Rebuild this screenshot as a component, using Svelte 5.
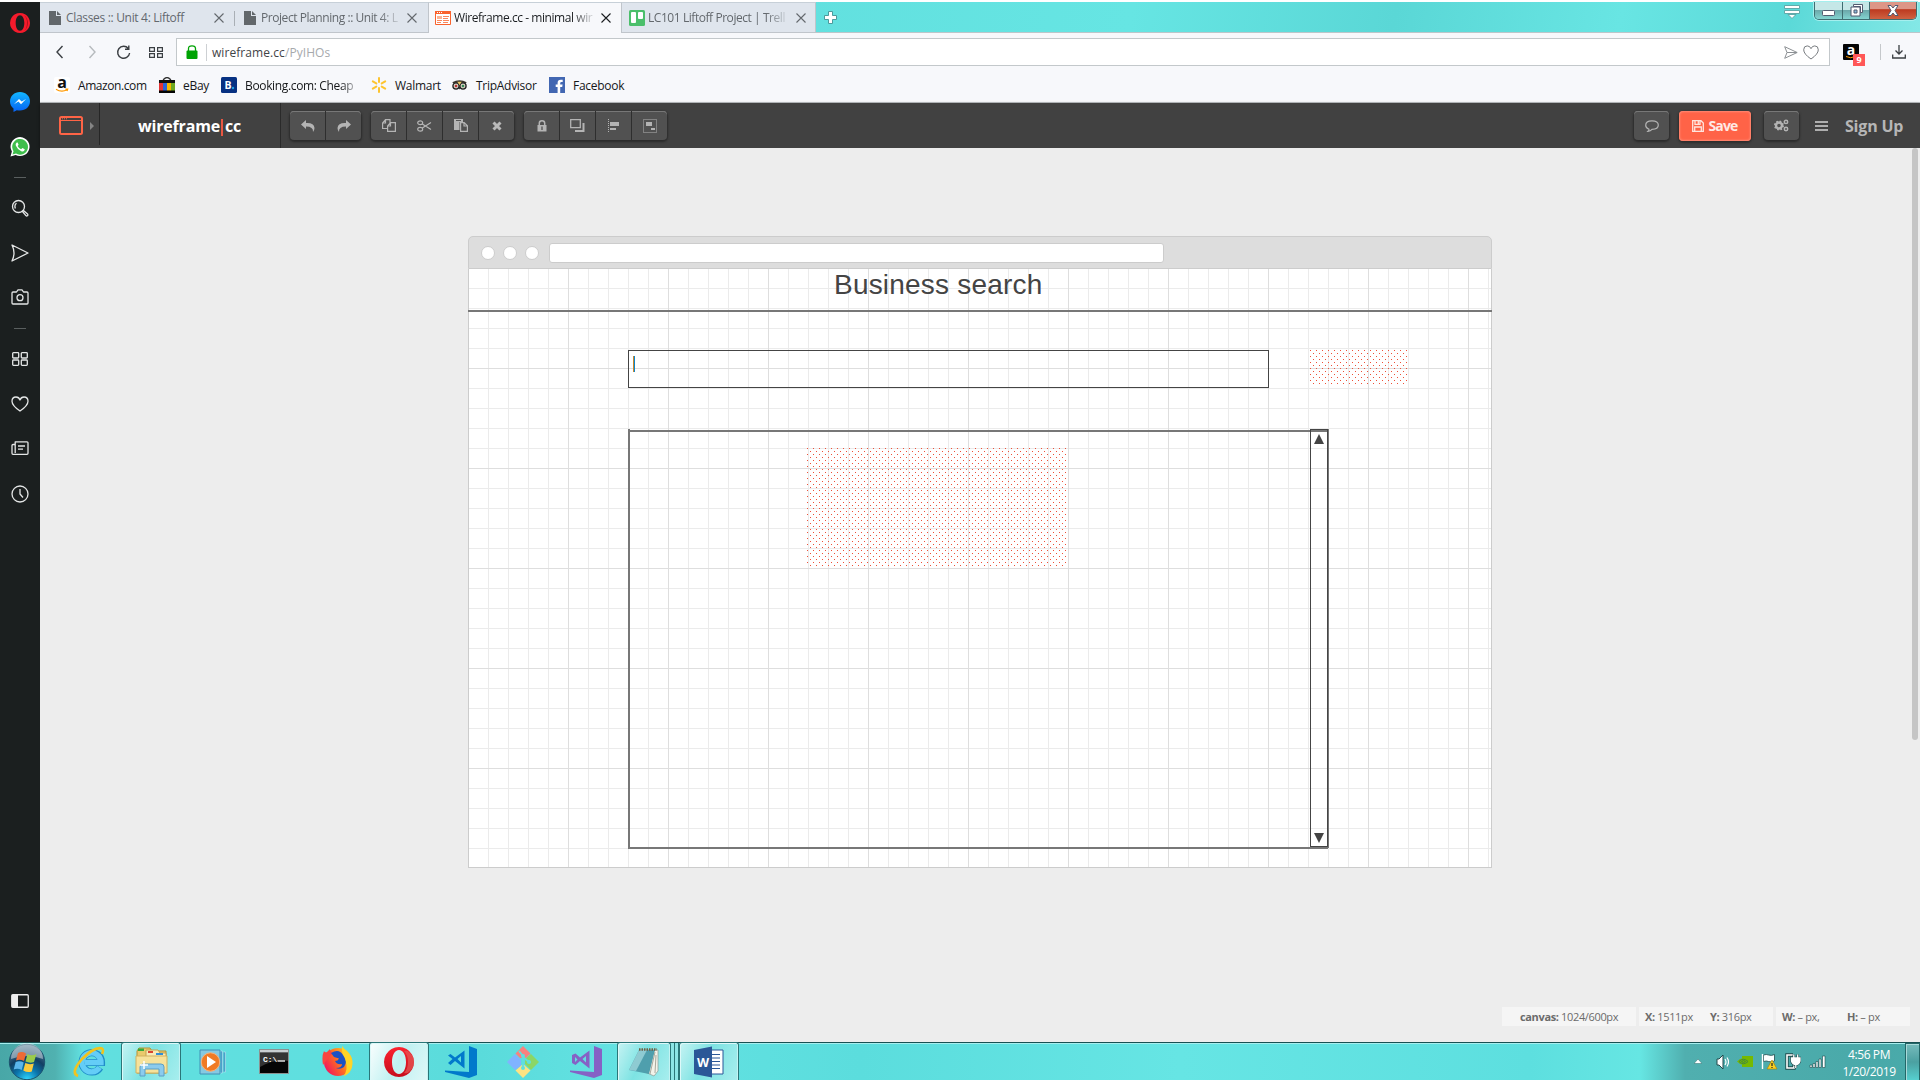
<script>
  const tabs = [
    { title: 'Classes :: Unit 4: Liftoff', icon: 'file', width: 195, cls: 'sep' },
    { title: 'Project Planning :: Unit 4: L', icon: 'file', width: 194, cls: 'wide edge' },
    { title: 'Wireframe.cc - minimal wir', icon: 'wire', width: 192, cls: 'active wide' },
    { title: 'LC101 Liftoff Project | Trell', icon: 'trello', width: 195, cls: 'edge left wide' },
  ];
  const bookmarks = [
    { title: 'Amazon.com', icon: 'amazon', width: 105 },
    { title: 'eBay', icon: 'ebay', width: 62 },
    { title: 'Booking.com: Cheap', icon: 'booking', width: 150 },
    { title: 'Walmart', icon: 'walmart', width: 81 },
    { title: 'TripAdvisor', icon: 'trip', width: 97 },
    { title: 'Facebook', icon: 'facebook', width: 90 },
  ];
  const side = [
    { icon: 'opera', h: 42 }, { icon: '', h: 36 }, { icon: 'messenger', h: 44 }, { icon: 'whatsapp', h: 46 },
    { icon: 'rule', h: 14 }, { icon: 'search', h: 48 }, { icon: 'send', h: 42 }, { icon: 'camera', h: 46 },
    { icon: 'rule', h: 16 }, { icon: 'grid', h: 46 }, { icon: 'heart', h: 44 }, { icon: 'news', h: 44 },
    { icon: 'clock', h: 48 },
  ];
  const groups = [['undo', 'redo'], ['copy', 'cut', 'paste', 'remove'], ['lock', 'layer', 'align', 'group']];
  const tasks = [
    { icon: 'start', w: 54 }, { icon: 'ie', w: 67 }, { icon: 'explorer', w: 60, cls: 'open' }, { icon: 'media', w: 65 },
    { icon: 'cmd', w: 57 }, { icon: 'firefox', w: 66 }, { icon: 'operabig', w: 60, cls: 'open bright' },
    { icon: 'code', w: 63 }, { icon: 'git', w: 62 }, { icon: 'vs', w: 63 }, { icon: 'notepad', w: 54, cls: 'open' },
    { icon: 'stack', w: 8 }, { icon: 'word', w: 60, cls: 'open' },
  ];
</script>

{#snippet glyph(name)}
  {#if name === 'file'}
    <svg width="12" height="14" viewBox="0 0 12 14"><path d="M0 0h7v5h5v9H0z M8 0l4 4H8z" fill="#62676b" /></svg>
  {:else if name === 'wire'}
    <svg width="16" height="14" viewBox="0 0 16 14"><path d="M.5.5h15v13H.5z" fill="#fff" stroke="#f9622d" /><path d="M0 0h16v3H0z" fill="#f9622d" /><path d="M2 1.500h1M4 1.500h1M6 1.500h1" stroke="#fff" /><path d="M2 5h5v3H2z" fill="#fbb394" /><path d="M8 5.500h6M8 7.500h5M2 9.500h5M8 9.500h6M2 11.500h4M8 11.500h5" stroke="#f9875e" /></svg>
  {:else if name === 'trello'}
    <svg width="16" height="16" viewBox="0 0 16 16"><rect width="16" height="16" rx="1.5" fill="#4bbf6b" /><rect x="2" y="2" width="5" height="11" rx="1" fill="#fff" /><rect x="9" y="2" width="5" height="7" rx="1" fill="#fff" /></svg>
  {:else if name === 'close'}
    <svg width="10" height="10" viewBox="0 0 10 10"><path d="M.5.5l9 9M9.500.5l-9 9" stroke="currentColor" stroke-width="1.1" /></svg>
  {:else if name === 'amazon'}
    <svg width="16" height="16" viewBox="0 0 16 16"><rect width="16" height="16" rx="2" fill="#fff" /><text x="8" y="10.500" text-anchor="middle" font-size="16" font-weight="700" font-family="Open Sans, sans-serif" fill="#111">a</text><path d="M2 12.200q5.500 3.600 11 .6M11.300 12h2.400l-.7 2" fill="none" stroke="#f90" stroke-width="1.200" /></svg>
  {:else if name === 'ebay'}
    <svg width="16" height="16" viewBox="0 0 16 16"><path d="M4.500 3.500v-1q3.500-4 7 0v1" fill="none" stroke="#333" stroke-width="1.300" /><path d="M0 3h16v13H0z" fill="#111" /><path d="M0 6h4v8H0z" fill="#e33434" /><path d="M4 6h4v8H4z" fill="#2a64d8" /><path d="M8 6h4v8H8z" fill="#f5b800" /><path d="M12 6h4v8h-4z" fill="#6da820" /><path d="M0 13.500h16V16H0z" fill="#050505" /></svg>
  {:else if name === 'booking'}
    <svg width="16" height="16" viewBox="0 0 16 16"><rect width="16" height="16" rx="1.5" fill="#073182" /><text x="3.500" y="12" font-size="10.500" font-weight="700" font-family="Open Sans, sans-serif" fill="#fff">B</text><circle cx="12" cy="11" r="1.200" fill="#1ba0e2" /></svg>
  {:else if name === 'walmart'}
    <svg width="16" height="16" viewBox="0 0 16 16"><path d="M8 1v4M8 11v4M1.800 4.400l3.500 2M10.700 9.600l3.500 2M1.800 11.600l3.500-2M10.700 6.400l3.500-2" stroke="#fdc42f" stroke-width="2" stroke-linecap="round" /></svg>
  {:else if name === 'trip'}
    <svg width="15" height="11" viewBox="0 0 16 12"><path d="M0 2.500q8-4.500 16 0l-2 1.500H2z" fill="#39352b" /><circle cx="4.200" cy="6.500" r="3.400" fill="#d5cfc0" stroke="#222" stroke-width="1.400" /><circle cx="11.800" cy="6.500" r="3.400" fill="#d5cfc0" stroke="#222" stroke-width="1.400" /><circle cx="4.200" cy="6.500" r="1.400" fill="#b33" /><circle cx="11.800" cy="6.500" r="1.400" fill="#385" /><path d="M5.500 2h5L8 5.500z" fill="#e9c663" /><path d="M7 8h2l-1 2.500z" fill="#222" /></svg>
  {:else if name === 'facebook'}
    <svg width="16" height="16" viewBox="0 0 16 16"><path d="M0 0h16v16H0z" fill="#4267b2" /><path d="M8.600 16v-6H6.700V7.500h1.900V6q0-3.300 3.200-3.300h1.900V5h-1.300q-1.200 0-1.200 1.200v1.300h2.400l-.4 2.500h-2v6z" fill="#fff" /></svg>
  {:else if name === 'opera'}
    <svg width="20" height="20" viewBox="0 0 20 20"><path fill-rule="evenodd" d="M10 0a10 10 0 1 0 .01 0M10 2.300c2.600 0 4.300 3.200 4.300 7.700s-1.700 7.700-4.300 7.700-4.300-3.200-4.300-7.700S7.400 2.300 10 2.300" fill="#f51b2c" /><path d="M14 2q3 3 3 8t-3 8a10 10 0 0 0 0-16" fill="#b2101c" /></svg>
  {:else if name === 'messenger'}
    <svg width="20" height="20" viewBox="0 0 20 20"><defs><linearGradient id="msg" x1="0" y1="0" x2="0" y2="1"><stop offset="0" stop-color="#12b6ff" /><stop offset="1" stop-color="#0561f5" /></linearGradient></defs><path d="M10 0C4.300 0 0 4 0 9.400c0 2.900 1.300 5.300 3.500 7V20l3.300-1.800c1 .3 2 .4 3.200.4 5.700 0 10-4 10-9.300S15.700 0 10 0z" fill="url(#msg)" /><path d="M4 12.300L9 7l2.700 2.600L16 7l-5 5.200-2.600-2.600z" fill="#fff" /></svg>
  {:else if name === 'whatsapp'}
    <svg width="20" height="20" viewBox="0 0 20 20"><path d="M.5 19.500l1.400-5A9.500 9.500 0 1 1 5.600 18z" fill="#fff" /><path d="M2.500 17.500l1-3.300A7.900 7.900 0 1 1 6 16.600z" fill="#3fbe4c" /><path d="M6.800 5.400q-1.800 1.100-.9 3.400 1.600 3.900 5.400 5.400 2.900 1 3.500-2l-2.400-1.300-1.300 1.300q-2.400-1-3.500-3.300l1-1.200-1-2.300z" fill="#fff" /></svg>
  {:else if name === 'rule'}
    <span class="rule"></span>
  {:else if name === 'search'}
    <svg class="ln" width="18" height="18" viewBox="0 0 18 18"><circle cx="7.500" cy="7.500" r="6" /><path d="M4.400 9.500Q3 6 5.500 4.200M11.500 12.500l1-1 4 3.500q.8 1-.1 1.700-.8.600-1.500-.1z" /></svg>
  {:else if name === 'send'}
    <svg class="ln" width="18" height="18" viewBox="0 0 18 18"><path d="M1 1l16 8L1 17q4-8 0-16z" /></svg>
  {:else if name === 'camera'}
    <svg class="ln" width="18" height="16" viewBox="0 0 18 16"><path d="M2 3h3.500L7 .8h4L12.500 3H16q1 0 1 1v10q0 1-1 1H2q-1 0-1-1V4q0-1 1-1z" /><circle cx="9" cy="8.700" r="3" /></svg>
  {:else if name === 'grid'}
    <svg class="ln" width="16" height="14" viewBox="0 0 16 14"><rect x=".7" y=".7" width="6" height="5.300" rx=".8" /><rect x="9.300" y=".7" width="6" height="5.300" rx=".8" /><rect x=".7" y="8" width="6" height="5.300" rx=".8" /><rect x="9.300" y="8" width="6" height="5.300" rx=".8" /></svg>
  {:else if name === 'heart'}
    <svg class="ln" width="18" height="16" viewBox="0 0 18 16"><path d="M9 15Q1 9.500 1 5.200 1 1 5 1q3 0 4 3 1-3 4-3 4 0 4 4.200Q17 9.500 9 15z" /></svg>
  {:else if name === 'news'}
    <svg class="ln" width="18" height="14" viewBox="0 0 18 14"><path d="M4.200 12V.8h11.800q1 0 1 1v10.500q0 1-1 1H2q-1 0-1-1V4.500q0-1 1-1h2M7 5h7M7 8.200h5" /></svg>
  {:else if name === 'clock'}
    <svg class="ln" width="18" height="18" viewBox="0 0 18 18"><circle cx="9" cy="9" r="8" /><path d="M9 4v5l3 3.500" /></svg>
  {:else if name === 'panel'}
    <svg width="18" height="14" viewBox="0 0 18 14"><rect x=".75" y=".75" width="16.500" height="12.500" rx="1" fill="none" stroke="#eee" stroke-width="1.300" /><path d="M1 1h6v12H1z" fill="#eee" /></svg>
  {:else if name === 'undo'}
    <svg width="14" height="12" viewBox="0 0 14 12"><path d="M0 4.500L5 0v3q8-.500 8.500 5 0 2-1.500 4 .5-5.500-7-5.500V9z" fill="#b4b4b4" /></svg>
  {:else if name === 'redo'}
    <svg width="14" height="12" viewBox="0 0 14 12"><path d="M14 4.500L9 0v3Q1 2.500.5 8q0 2 1.500 4-.5-5.500 7-5.500V9z" fill="#b4b4b4" /></svg>
  {:else if name === 'copy'}
    <svg class="tl" width="14" height="13" viewBox="0 0 14 13"><path d="M5 9.500H.6V4L3.500.6H8V4M3.500.6V4H.6M8.500 3.600h4.900v8.800H5.600V7zM8.500 3.600V7H5.600" /></svg>
  {:else if name === 'cut'}
    <svg class="tl" width="15" height="12" viewBox="0 0 15 12"><ellipse cx="3.200" cy="2.800" rx="2.500" ry="1.900" /><ellipse cx="3.200" cy="9.200" rx="2.500" ry="1.900" /><path d="M5.300 4L14 9.500M5.300 8L14 2.500M7 6h2" /></svg>
  {:else if name === 'paste'}
    <svg width="14" height="13" viewBox="0 0 14 13"><path d="M0 0h9v3H5.500v8H0z" fill="#b4b4b4" /><path d="M2 1.500h5" stroke="#555" /><path d="M6.600 3.600h3.600l3.200 3.200v5.600H6.600z M10 3.600V7h3.400" fill="#515151" stroke="#b4b4b4" stroke-width="1.200" /></svg>
  {:else if name === 'remove'}
    <svg width="10" height="10" viewBox="0 0 10 10"><path d="M1.500 1.500l7 7M8.500 1.500l-7 7" stroke="#b9b9b9" stroke-width="3" /></svg>
  {:else if name === 'lock'}
    <svg width="10" height="12" viewBox="0 0 10 12"><path d="M2.300 5V3.300q0-2.500 2.700-2.500t2.700 2.500V5" fill="none" stroke="#b4b4b4" stroke-width="1.500" /><path d="M.5 5h9v6.500h-9z" fill="#b4b4b4" /><path d="M5 6.500v3.500" stroke="#515151" stroke-width="1.300" /></svg>
  {:else if name === 'layer'}
    <svg width="15" height="13" viewBox="0 0 15 13"><path d="M5 11h7.500V4H14.500v9H5z" fill="#b4b4b4" /><path d="M.7.7h9.600v8H.7z" fill="none" stroke="#b4b4b4" stroke-width="1.300" /></svg>
  {:else if name === 'align'}
    <svg width="12" height="14" viewBox="0 0 12 14"><path d="M.5 0v14" stroke="#b4b4b4" stroke-dasharray="1 1" /><path d="M2 3h9v4H2zM2 9h6v2H2z" fill="#b4b4b4" /></svg>
  {:else if name === 'group'}
    <svg width="14" height="14" viewBox="0 0 14 14"><path d="M.5.5h13v13H.5z" fill="none" stroke="#b4b4b4" stroke-dasharray="1 1" /><path d="M3 3h6v4H3zM8 9h4v2H8z" fill="#b4b4b4" /></svg>
  {:else if name === 'comment'}
    <svg class="tl" width="14" height="12" viewBox="0 0 14 12"><path d="M4 9.200Q.7 8 .7 5.200.7.900 7 .9t6.300 4.200Q13.300 9.400 7 9.400q-1.500 1.800-4 1.900 1-.9 1-2.100z" /></svg>
  {:else if name === 'save'}
    <svg width="12" height="12" viewBox="0 0 12 12"><path d="M.7.7h8.300l2.300 2.300v8.300H.7zM3 .7v3.600h5V.7M2.700 11V7h6.600v4M6.300 1v3" fill="none" stroke="#ffe5df" stroke-width="1.300" /></svg>
  {:else if name === 'gears'}
    <svg width="15" height="13" viewBox="0 0 15 13"><circle cx="5" cy="6.500" r="3" fill="none" stroke="#b4b4b4" stroke-width="2.400" /><circle cx="5" cy="6.500" r="4.300" fill="none" stroke="#b4b4b4" stroke-width="1.400" stroke-dasharray="1.700 1.700" /><circle cx="12" cy="2.900" r="1.700" fill="none" stroke="#b4b4b4" stroke-width="1.500" /><circle cx="12" cy="10" r="1.700" fill="none" stroke="#b4b4b4" stroke-width="1.500" /></svg>
  {:else if name === 'start'}
    <svg width="38" height="38" viewBox="0 0 38 38"><defs><radialGradient id="orb" cx=".5" cy="1" r=".95"><stop offset="0" stop-color="#2fd9ff" /><stop offset=".35" stop-color="#0b76ad" /><stop offset=".65" stop-color="#123f63" /><stop offset="1" stop-color="#587e96" /></radialGradient></defs><circle cx="19" cy="19" r="17.700" fill="url(#orb)" stroke="#1c5470" /><path d="M3 16a16 16 0 0 1 32 0q-16-6-32 0z" fill="#fff" opacity=".42" /><path d="M10 10q4-2 8 .5L16 18q-4-2-8-.5z" fill="#ee6a35" /><path d="M19.500 11q4 2.500 9 0L26 19q-4 1.500-8.500-.5z" fill="#9bcb4b" /><path d="M7.700 19q4-1.500 8 .5l-2 7.500q-4-2-8-.5z" fill="#5bb6ec" /><path d="M17.300 20q4 2 8.500.5l-2 8q-4.500 1.500-8.500-1z" fill="#fbcb3d" /></svg>
  {:else if name === 'ie'}
    <svg width="34" height="34" viewBox="0 0 34 34"><path d="M27 22.500a9.700 9.700 0 1 1 1.500-5H12" fill="none" stroke="#1f8dc9" stroke-width="7.200" /><path d="M26.500 22.500a9.500 9.500 0 1 1 1.500-5H12" fill="none" stroke="#64cdf7" stroke-width="5.400" /><path d="M5 31Q-3 28 9 14 22 1 29 3.500q2 1.500 0 5.500" fill="none" stroke="#f1c31e" stroke-width="2.600" /></svg>
  {:else if name === 'explorer'}
    <svg width="34" height="32" viewBox="0 0 34 32"><path d="M3 5l2-3h11l2 3h14v22H3z" fill="#e9ca6d" stroke="#b69137" /><path d="M12 4h12l2 3h6v5H12z" fill="#f9eab5" stroke="#c3a24c" /><path d="M4 2.500h6V5H4z" fill="#35ac3b" /><path d="M14 5h5v2h-5z" fill="#d94430" /><path d="M22 7h7v2h-7z" fill="#2f8fd6" /><path d="M2 10h31v17H2z" fill="#f6e29b" stroke="#d1b161" /><path d="M6 30V21q0-3 3-3h18q3 0 3 3v9h-5v-7H11v7z" fill="#8ccbed" stroke="#5b9fc6" /><path d="M10 15v8M6 19h8" stroke="#fff" stroke-width="1.500" /></svg>
  {:else if name === 'media'}
    <svg width="30" height="26" viewBox="0 0 30 26"><path d="M1 1h20v24H1z" fill="#85c9e2" stroke="#4190b5" /><path d="M21.500 2h2v22h-2M24.500 3h2v20h-2" fill="#4e9fc9" stroke="#c9ecf7" stroke-width=".5" /><circle cx="11.500" cy="13" r="9.200" fill="#f07a24" stroke="#f7b27a" /><path d="M8 7l9 6-9 6z" fill="#fff" /></svg>
  {:else if name === 'cmd'}
    <svg width="30" height="25" viewBox="0 0 30 25"><path d="M.5.5h29v24H.5z" fill="#050505" stroke="#8b9190" /><path d="M1 1h28v2.500H1z" fill="#c9cfd2" /><path d="M1 4h28v8Q15 10 1 18z" fill="#343434" /><text x="4" y="12.500" font-family="Liberation Mono, monospace" font-weight="700" font-size="8" fill="#fff">C:\</text><path d="M18.500 12h7.500" stroke="#fff" stroke-width="1.300" /></svg>
  {:else if name === 'firefox'}
    <svg width="31" height="32" viewBox="0 0 31 32"><defs><linearGradient id="fox" x1="0" y1=".7" x2="1" y2=".1"><stop offset="0" stop-color="#f0165f" /><stop offset=".45" stop-color="#ff6a22" /><stop offset="1" stop-color="#ffe226" /></linearGradient></defs><circle cx="16" cy="16" r="14" fill="url(#fox)" /><path d="M2 5q1 2 3 1l3-3q0 3 3 4L4 15 1 19Q-.5 10 2 5z" fill="#fb4440" /><path d="M20 0q2 3 5 5 6 6 5.500 13-.5 9-9 12.500 5-8 2-15-4-6-3.500-15.500z" fill="#ffd426" /><path d="M9 7q8-5 12 2 5 7 1 12-4 3-8 1 6 0 6-4-5 1-7-3 3 0 4-2.500L12 11z" fill="#1c51c4" /></svg>
  {:else if name === 'operabig'}
    <svg width="32" height="32" viewBox="0 0 32 32"><defs><linearGradient id="op" x1="0" y1="0" x2="0" y2="1"><stop offset="0" stop-color="#fb2330" /><stop offset="1" stop-color="#c70d1c" /></linearGradient></defs><path fill-rule="evenodd" d="M16 1a15 15 0 1 0 .01 0M16 4c4.200 0 7 5 7 12s-2.800 12-7 12S9 23 9 16 11.800 4 16 4" fill="url(#op)" /><path d="M21 5q4 4 4 11t-4 11q3 1 5-1 5-4 5-10T26 6q-2-2-5-1z" fill="#e25553" opacity=".75" /></svg>
  {:else if name === 'code' || name === 'vs'}
    <svg class={name} width="32" height="32" viewBox="0 0 32 32"><path d="M24 0l8 3v26l-8 3L0 26v-1.500L24 26z" fill="currentColor" />{#if name === 'code'}<path d="M19.500 4.500v18L10 15l-4.500 4L3 17l4.500-4L3 9.500 5.500 8 10 11.500zM16 10L12.500 13l3.500 3.500z" fill="currentColor" fill-rule="evenodd" />{:else}<path d="M19.500 4.500v18L10 15l-4.500 4L2 17V9l3.500-1.500L10 11.500zM5 11v5l2.500-2.500zM16 10l-3.500 3 3.500 3.500z" fill="currentColor" fill-rule="evenodd" />{/if}</svg>
  {:else if name === 'git'}
    <svg width="32" height="32" viewBox="0 0 32 32"><path d="M16 0l7.500 7.500L19 12h-6L8.500 7.500z" fill="#f8817e" /><path d="M8 8l6 6v6l-6 4-8-8z" fill="#80b3ff" /><path d="M24 8l8 8-8 8-6-6v-5z" fill="#8bd666" /><path d="M16 18l7.500 6.500L16 32l-7.500-7.500z" fill="#fde382" /><path d="M12 5l4 5v12M16 11l6 5" stroke="#60dfde" stroke-width="1.800" fill="none" /><circle cx="16" cy="10" r="2" fill="#60dfde" /><circle cx="16" cy="22" r="2" fill="#60dfde" /><circle cx="22" cy="16" r="2" fill="#60dfde" /></svg>
  {:else if name === 'notepad'}
    <svg width="32" height="30" viewBox="0 0 32 30"><path d="M12 3h18v21l-4 5-9-4z" fill="#f3f3ea" stroke="#8d9a92" stroke-width=".7" /><path d="M11 3h16l-6 24-20-4z" fill="#4f9fad" /><path d="M11 3h8L8 24l-7-1z" fill="#8ecbd2" /><path d="M27 5l-5 22M28 8l-1 18" stroke="#a8a89c" /><path d="M11 2.500h18" stroke="#6e6045" stroke-width="2.500" stroke-dasharray="1.500 1" /></svg>
  {:else if name === 'word'}
    <svg width="32" height="32" viewBox="0 0 32 32"><path d="M17 4h13v24H17z" fill="#fff" stroke="#2b5797" /><path d="M18 8.500h9M18 12h9M18 15.500h9M18 19h9M18 22.500h9" stroke="#2b5797" stroke-width="1.200" /><path d="M1 4l18-3.500v31L1 28z" fill="#2b5797" /><text x="10" y="20.500" text-anchor="middle" font-family="Open Sans, sans-serif" font-size="12.500" font-weight="700" fill="#fff">W</text></svg>
  {/if}
{/snippet}

<div class="screen">
  <div class="top-edge"></div>
  <div class="browser">
    <aside>
      {#each side as item}
        <div class="side" style:height="{item.h}px">{@render glyph(item.icon)}</div>
      {/each}
      <div class="side bottom">{@render glyph('panel')}</div>
    </aside>

    <div class="main">
      <div class="tabs">
        {#each tabs as t}
          <div class="tab {t.cls}" style:width="{t.width}px">
            <span class="fav">{@render glyph(t.icon)}</span>
            <span class="tab-title">{t.title}</span>
            {@render glyph('close')}
          </div>
        {/each}
        <svg class="plus" width="13" height="13" viewBox="0 0 13 13"><path d="M4.500.5h4v4h4v4h-4v4h-4v-4h-4v-4h4z" fill="#fff" stroke="#4b9a9c" /></svg>
        <svg class="tabmenu" width="16" height="14" viewBox="0 0 16 14"><path d="M.5.5h15v3H.5zM.5 5.500h15v3H.5zM4 9.500h8l-4 4z" fill="#fff" stroke="#58a3a4" stroke-width=".9" /></svg>
        <div class="winctl">
          <span class="min"><svg width="13" height="6" viewBox="0 0 13 6"><rect x=".5" y=".5" width="12" height="5" rx="1" fill="#fff" stroke="#535b70" /></svg></span>
          <span class="max"><svg width="13" height="13" viewBox="0 0 13 13"><path d="M3.500.5h9v8h-2v-6h-7z" fill="#fff" stroke="#535b70" /><path d="M1 3h9v9H1z" fill="#fff" stroke="#535b70" /><path d="M4 6h3v3H4z" fill="#8bd" stroke="#535b70" /></svg></span>
          <span class="cls"><svg width="12" height="11" viewBox="0 0 12 11"><path d="M1 .5h3l2 2.500 2-2.500h3L8 5.500l3 5H8L6 8l-2 2.500H1l3-5z" fill="#fff" stroke="#535b70" /></svg></span>
        </div>
      </div>

      <div class="address">
        <svg class="nav" width="32" height="20" viewBox="0 0 32 20"><path d="M18.500 4L13 10l5.500 6" fill="none" stroke="#3b3f43" stroke-width="1.400" /></svg>
        <svg class="nav" width="32" height="20" viewBox="0 0 32 20"><path d="M13.500 4L19 10l-5.500 6" fill="none" stroke="#b6babd" stroke-width="1.400" /></svg>
        <svg class="nav" width="32" height="20" viewBox="0 0 32 20"><path d="M20.300 6.500a6 6 0 1 0 1.300 4.500M20.800 3.500v3.800H17" fill="none" stroke="#3b3f43" stroke-width="1.400" /></svg>
        <svg class="nav" width="32" height="20" viewBox="0 0 32 20"><path d="M9.600 5.600h4.800v3.800H9.600zM17.600 5.600h4.800v3.800h-4.800zM9.600 11.600h4.800v3.800H9.600zM17.600 11.600h4.800v3.800h-4.800z" fill="none" stroke="#3b3f43" stroke-width="1.200" /></svg>
        <div class="field">
          <svg width="12" height="14" viewBox="0 0 12 14"><path d="M2.500 6V3.500q0-2.700 3.500-2.700t3.500 2.700V6" fill="none" stroke="#00a304" stroke-width="1.300" /><rect y="5.500" x=".5" width="11" height="8.500" rx="1" fill="#00a304" /></svg>
          <span class="url">wireframe.cc<i>/PyIHOs</i></span>
          <svg width="14" height="13" viewBox="0 0 14 13"><path d="M.7.7l12.500 5.800L.7 12.300 3 6.500zM3 6.500h10" fill="none" stroke="#8c9094" /></svg>
          <svg width="16" height="15" viewBox="0 0 16 15"><path d="M8 14Q.7 9 .7 4.800.7.900 4.200.9 7 .9 8 3.700 9 .9 11.800.9q3.500 0 3.500 3.900Q15.300 9 8 14z" fill="none" stroke="#777b7f" /></svg>
        </div>
        <div class="ext">
          <svg width="16" height="16" viewBox="0 0 16 16"><rect width="16" height="16" rx="1" fill="#050505" /><text x="8" y="11" text-anchor="middle" font-family="Open Sans, sans-serif" font-weight="700" font-size="14" fill="#fff">a</text><path d="M3 12.500q5 2.500 9 0" stroke="#f90" fill="none" /></svg>
          <span class="badge">9</span>
        </div>
        <svg class="dl" width="14" height="14" viewBox="0 0 14 14"><path d="M7 0v8.500M3.500 5.500L7 9l3.500-3.500M.7 9.500V13h12.600V9.500" fill="none" stroke="#3b3f43" stroke-width="1.300" /></svg>
      </div>

      <div class="bookmarks">
        {#each bookmarks as b}
          <div class="bm" style:width="{b.width}px">
            <span class="bi">{@render glyph(b.icon)}</span>
            <span class="bt {b.icon}">{b.title}</span>
          </div>
        {/each}
      </div>

      <div class="toolbar">
        <div class="device">
          <svg width="24" height="19" viewBox="0 0 24 19"><rect x="1" y="1" width="22" height="17" rx="1.500" fill="none" stroke="#ff6446" stroke-width="2" /><path d="M2 4.500h20" stroke="#ff6446" /><path d="M3 2.800h1M5 2.800h1M7 2.800h1" stroke="#ff6446" /></svg>
          <svg width="4" height="8" viewBox="0 0 4 8"><path d="M0 0l4 4-4 4z" fill="#858585" /></svg>
        </div>
        <div class="logo">wireframe<b></b>cc</div>
        {#each groups as g}
          <div class="group">
            {#each g as name}<span class="btn">{@render glyph(name)}</span>{/each}
          </div>
        {/each}
        <span class="fill"></span>
        <div class="group solo"><span class="btn">{@render glyph('comment')}</span></div>
        <div class="save">{@render glyph('save')}<span>Save</span></div>
        <div class="group solo"><span class="btn">{@render glyph('gears')}</span></div>
        <svg class="burger" width="13" height="10" viewBox="0 0 13 10"><path d="M0 1h13M0 5h13M0 9h13" stroke="#aeaeae" stroke-width="2" /></svg>
        <span class="signup">Sign Up</span>
      </div>

      <div class="work">
        <div class="frame">
          <div class="frame-head"><i></i><i></i><i></i><span></span></div>
          <div class="canvas">
            <div class="item heading">Business search</div>
            <div class="item hline"></div>
            <div class="item input"><span></span></div>
            <div class="item dots small"></div>
            <div class="item box-top"></div>
            <div class="item box-left"></div>
            <div class="item box-right"></div>
            <div class="item box-bottom"></div>
            <div class="item dots large"></div>
            <div class="item scroll">
              <svg width="10" height="10" viewBox="0 0 10 10"><path d="M5 0l5 10H0z" fill="#444" /></svg>
              <svg width="10" height="10" viewBox="0 0 10 10"><path d="M0 0h10L5 10z" fill="#444" /></svg>
            </div>
          </div>
        </div>
        <div class="page-scroll"></div>
        <div class="status">
          <div class="center"><span><b>canvas:</b> 1024/600px</span></div>
          <div><span class="first"><b>X:</b> 1511px</span><span><b>Y:</b> 316px</span></div>
          <div><span class="first"><b>W:</b> – px,</span><span><b>H:</b> – px</span></div>
        </div>
      </div>
    </div>
  </div>

  <div class="taskbar">
    {#each tasks as t}
      <div class="task {t.icon}-task {t.cls ?? ''}" style:width="{t.w}px">{@render glyph(t.icon)}</div>
    {/each}
    <div class="tray">
      <svg class="t1" width="8" height="5" viewBox="0 0 8 5"><path d="M4 0l4 4.500H0z" fill="#fff" stroke="#2d6c6c" stroke-width=".5" /></svg>
      <svg class="t2" width="14" height="16" viewBox="0 0 14 16"><path d="M1 5h2l4-4v14l-4-4H1z" fill="#fff" stroke="#22494a" /><path d="M9 5q2 3 0 6M11 3.500q3 4.500 0 9" fill="none" stroke="#fff" stroke-width="1.200" /></svg>
      <svg class="t3" width="16" height="11" viewBox="0 0 16 11"><path d="M5 0h11v11H5z" fill="#76b900" /><path d="M0 5.500Q6-1 12 5.500 6 12 0 5.500z" fill="#76b900" /><path d="M2 5.500Q6.500 1 11 5.500 6.500 10 2 5.500zM4.500 5.500q2-2 4 0-2 2-4 0" fill="none" stroke="#438a3f" /></svg>
      <svg class="t4" width="17" height="17" viewBox="0 0 17 17"><path d="M1.500 1v15M2.500 2q3-1 5 0 3 1 6-.5v6.500q-3 1.500-6 .5-2-1-5 0z" fill="#fff" stroke="#204a4b" stroke-width=".8" /><path d="M1.500 1v15" stroke="#fff" stroke-width="1.400" /><path d="M11 7l5 9H6z" fill="#f8cf24" stroke="#a67c00" stroke-width=".6" /><path d="M11 10v3M11 14v1" stroke="#222" stroke-width="1.200" /></svg>
      <svg class="t5" width="16" height="17" viewBox="0 0 16 17"><path d="M8 2H2v13h7v-3" fill="none" stroke="#204a4b" stroke-width="3.400" /><path d="M8 2H2v13h7v-3" fill="none" stroke="#fff" stroke-width="1.600" /><path d="M6.500 5h8.500v3q-1 3.500-4.200 3.500T6.500 8zM8.800 1.500v4M12.700 1.500v4M10.800 11v4" fill="#fff" stroke="#204a4b" stroke-width="2.600" /><path d="M6.500 5h8.500v3q-1 3.500-4.200 3.500T6.500 8zM8.800 1.500v4M12.700 1.500v4M10.800 11v4" fill="#fff" stroke="#fff" stroke-width="1.300" /></svg>
      <svg class="t6" width="17" height="13" viewBox="0 0 17 13"><path d="M1 10h2v2.500H1zM4 8.500h2v4H4zM7 6.500h2v6H7zM10 4h2v8.500h-2zM13.500 1h2.500v11.500h-2.500z" fill="#fff" stroke="#204a4b" stroke-width=".6" /></svg>
      <div class="time"><span>4:56 PM</span><span>1/20/2019</span></div>
      <div class="peek"></div>
    </div>
  </div>
</div>

<style>
  :global(body) { margin: 0; overflow: hidden; }
  .screen { width: 1920px; height: 1080px; display: flex; flex-direction: column; overflow: hidden; font-family: 'Open Sans', 'Noto Sans', sans-serif; font-size: 12px; }
  svg { display: block; flex: none; }
  .top-edge { height: 2px; background: #fff; flex: none; }
  .browser { display: flex; height: 1040px; flex: none; }
  aside { width: 40px; flex: none; display: flex; flex-direction: column; background: #1b1f1f; }
  .side { display: flex; align-items: center; justify-content: center; flex: none; }
  .side.bottom { height: 82px; margin-top: auto; }
  .side svg { margin-right: 1px; }
  .rule { width: 12px; height: 1px; background: #5a5f5f; }
  .ln { fill: none; stroke: #e4e6e6; stroke-width: 1.3; stroke-linejoin: round; }
  .main { width: 1880px; display: flex; flex-direction: column; }

  .tabs { height: 31px; display: flex; flex: none; box-sizing: border-box; border-bottom: 1px solid #bcc6ca; background: linear-gradient(100deg, #65e2e1 0%, #60dedd 32%, #66e5e3 58%, #5ad7d6 72%, #68e5e3 84%, #5bd9d8 93%, #84e8e6 100%); }
  .tab { box-sizing: border-box; height: 31px; display: flex; align-items: center; background: #dfe5ed; color: #63686d; padding: 0 11px 0 9px; border-top: 1px solid #c7d0d8; border-bottom: 1px solid #c0c5cb; flex: none; }
  .tab.sep { background: linear-gradient(#a9afb5, #a9afb5) 194px 8px / 1px 15px no-repeat, #dfe5ed; }
  .tab.edge { border-right: 1px solid #c0c5cb; }
  .tab.left { border-left: 1px solid #c0c5cb; padding-left: 7px; padding-right: 9px; }
  .tab.active { background: #f7f8fb; border-bottom-color: #f7f8fb; color: #1a1d20; padding-left: 6px; padding-right: 10px; }
  .fav { width: 17px; flex: none; }
  .active .fav, .left .fav { width: 19px; }
  .tab-title { flex: 1; white-space: nowrap; line-height: 20px; letter-spacing: -0.32px; }
  .wide .tab-title { letter-spacing: -0.44px; -webkit-mask-image: linear-gradient(90deg, #000 118px, transparent 142px); mask-image: linear-gradient(90deg, #000 118px, transparent 142px); }
  .plus { margin: 9px 0 0 8px; }
  .tabmenu { margin: 3px 14px 0 auto; }
  .winctl { display: flex; width: 101px; height: 17px; margin-right: 3px; border: 1px solid #3f6d71; border-top: 0; border-radius: 0 0 5px 5px; overflow: hidden; box-shadow: 0 0 0 1px #a5efee; }
  .winctl span { display: flex; align-items: center; justify-content: center; background: linear-gradient(#c5e7e7 0 45%, #6ca9ab 50%, #83d4d1); box-sizing: border-box; border-right: 1px solid #3f6d71; }
  .winctl .min { width: 28px; padding-top: 4px; }
  .winctl .max { width: 27px; padding-bottom: 1px; }
  .winctl .cls { flex: 1; border: 0; background: linear-gradient(#dd9687 0 40%, #bd3a20 45%, #cf6242); }

  .address { height: 38px; display: flex; align-items: center; background: #f7f8fb; flex: none; padding-left: 4px; }
  .nav { margin-top: -1px; }
  .field { width: 1654px; height: 28px; box-sizing: border-box; border: 1px solid #c3c8cb; background: #fff; margin-left: 4px; display: flex; align-items: center; padding: 0 10px 0 9px; flex: none; }
  .url { flex: 1; border-left: 1px solid #cdd0d3; margin-left: 8px; padding-left: 5px; line-height: 18px; height: 17px; color: #3f4347; letter-spacing: 0.07px; }
  .url i { font-style: normal; color: #a6a9ac; }
  .field svg:nth-of-type(3) { margin-left: 5px; }
  .ext { position: relative; margin-left: 13px; }
  .badge { position: absolute; left: 10px; top: 10px; width: 12px; height: 12px; background: #ff5757; color: #fff; font: 700 9px/12px 'Open Sans', sans-serif; text-align: center; }
  .dl { margin-left: 21px; padding-left: 11px; border-left: 1px solid #c5c8cb; height: 16px; }

  .bookmarks { height: 32px; display: flex; align-items: center; box-sizing: border-box; border-bottom: 1px solid #bfc2c5; background: #f7f8fb; flex: none; padding: 0 0 3px 14px; }
  .bm { display: flex; align-items: center; flex: none; }
  .bi { width: 24px; flex: none; }
  .bt { flex: 1; white-space: nowrap; color: #151719; letter-spacing: -0.28px; }
  .bt.amazon { letter-spacing: -0.42px; }
  .bt.booking { letter-spacing: -0.35px; -webkit-mask-image: linear-gradient(90deg, #000 96px, transparent 116px); mask-image: linear-gradient(90deg, #000 96px, transparent 116px); }

  .toolbar { height: 45px; background: #414141; display: flex; align-items: center; flex: none; position: relative; box-shadow: 0 1px 3px rgba(0, 0, 0, 0.45); }
  .device { width: 60px; height: 42px; align-self: flex-start; border-right: 1px solid #262626; display: flex; align-items: center; gap: 7px; padding: 3px 0 0 19px; box-sizing: border-box; }
  .logo { width: 181px; height: 45px; line-height: 46px; box-sizing: border-box; border-right: 1px solid #2a2a2a; text-align: center; color: #fff; font-weight: 700; font-size: 16px; letter-spacing: -0.18px; margin-right: 9px; padding-right: 1px; }
  .logo b { display: inline-block; width: 2px; height: 17px; margin: 0 2px 0 1px; background: #e95743; vertical-align: -4px; }
  .group { display: flex; border-radius: 4px; background: #515151; height: 29px; box-shadow: inset 0 1px 0 #777, 0 1px 2px 1px #2b2b2b; margin-right: 10px; overflow: hidden; flex: none; }
  .btn { width: 36px; display: flex; align-items: center; justify-content: center; box-sizing: border-box; border-right: 1px solid #2e2e2e; box-shadow: inset 0 1px 0 #777; }
  .btn:last-child { border-right: 0; width: 35px; }
  .tl { fill: none; stroke: #b4b4b4; stroke-width: 1.2; }
  .fill { flex: 1; }
  .save { width: 72px; height: 30px; box-sizing: border-box; border-radius: 4px; background: #ff6347; box-shadow: inset 0 0 2px 1px #ff8a75, 0 1px 2px 1px #2d2d2d; display: flex; align-items: center; justify-content: center; gap: 4px; color: #ffe9e4; font-weight: 700; font-size: 14px; letter-spacing: -0.8px; margin-right: 13px; }
  .burger { margin-left: 6px; }
  .signup { width: 77px; box-sizing: border-box; padding-left: 17px; margin-right: 15px; white-space: nowrap; color: #b6b6b6; font-weight: 700; font-size: 16px; letter-spacing: -0.2px; padding-top: 1px; }

  .work { flex: 1; background: #ededed; position: relative; padding: 88px 0 0 428px; }
  .frame { width: 1024px; height: 633px; }
  .frame-head { height: 33px; box-sizing: border-box; border: 1px solid #ccc; border-radius: 5px 5px 0 0; background: #ddd; display: flex; align-items: center; padding-left: 12px; }
  .frame-head i { width: 14px; height: 14px; box-sizing: border-box; border: 1px solid #ccc; border-radius: 50%; background: #fff; margin-right: 8px; }
  .frame-head span { width: 615px; height: 20px; box-sizing: border-box; border: 1px solid #ccc; border-radius: 3px; background: #fff; margin-left: 2px; }
  .canvas { position: relative; height: 599px; box-sizing: border-box; border: solid #ccc; border-width: 0 1px 1px 1px; background-color: #fff; background-origin: border-box; background-image: linear-gradient(90deg, #dedede 1px, transparent 1px), linear-gradient(#dedede 1px, transparent 1px), linear-gradient(90deg, #ebebeb 1px, transparent 1px), linear-gradient(#ebebeb 1px, transparent 1px); background-size: 100px 100px, 100px 100px, 20px 20px, 20px 20px; background-position: 0 0, 0 -1px, 0 0, 0 -1px; }
  .item { position: absolute; }
  .heading { left: 365px; top: 0; width: 212px; font: 28px/32px 'Liberation Sans', Arial, sans-serif; letter-spacing: 0.2px; color: #444; white-space: nowrap; }
  .hline { left: -1px; top: 41px; width: 1024px; height: 2px; background: #777; }
  .input { left: 159px; top: 81px; width: 641px; height: 38px; box-sizing: border-box; border: 1px solid #444; padding: 5px 4px; }
  .input span { display: block; width: 1px; height: 16px; background: #0a87d0; border-left: 1px solid #c9872d; }
  .dots { background-image: conic-gradient(from 270deg at 1px 1px, #ee5038 90deg, transparent 0), conic-gradient(from 270deg at 1px 1px, #ee5038 90deg, transparent 0); background-size: 6px 6px; background-position: 0 0, 3px 3px; }
  .small { left: 841px; top: 81px; width: 98px; height: 35px; }
  .large { left: 338px; top: 179px; width: 260px; height: 119px; }
  .box-top { left: 159px; top: 161px; width: 700px; height: 2px; background: #777; }
  .box-left { left: 159px; top: 160px; width: 2px; height: 419px; background: #777; }
  .box-right { left: 858px; top: 160px; width: 2px; height: 419px; background: #777; }
  .box-bottom { left: 159px; top: 578px; width: 700px; height: 2px; background: #777; }
  .scroll { left: 841px; top: 160px; width: 18px; height: 418px; box-sizing: border-box; border: 1px solid #444; display: flex; flex-direction: column; justify-content: space-between; align-items: center; padding: 4px 0 3px; }
  .page-scroll { position: absolute; right: 2px; top: 0; width: 6px; height: 592px; background: #c5c5c5; border-radius: 3px; }
  .status { position: absolute; right: 10px; bottom: 16px; display: flex; gap: 3px; font-size: 11px; color: #6b6b6b; }
  .status div { width: 134px; height: 19px; line-height: 20px; background: #f5f5f5; box-sizing: border-box; padding-left: 6px; display: flex; white-space: nowrap; letter-spacing: -0.35px; }
  .status div.center { padding-left: 18px; }
  .status .first { width: 65px; }

  .taskbar { height: 38px; flex: none; display: flex; box-sizing: border-box; border-top: 1px solid #185052; box-shadow: inset 0 1px 0 #a5eeee; background: linear-gradient(90deg, #48a7a7 0, #50b1b0 55px, #61dfdf 82px, #5fdfdf 330px, #5adbdb 480px, #63e2e2 620px, #5bdddd 860px, #66e5e4 1180px, #5ddfdf 1530px, #66e6e3 1640px, #50afaf 1685px, #49a9a9 1880px, #4aabab 1920px); }
  .task { display: flex; align-items: center; justify-content: center; flex: none; box-sizing: border-box; overflow: hidden; }
  .task.open { border: 1px solid #2a7678; border-bottom: 0; border-radius: 3px 3px 0 0; margin-top: -1px; background: linear-gradient(115deg, #c5f3f3, #7de3e3 45%, #a8eeee); box-shadow: inset 1px 1px 0 #dcf9f9, inset -1px 0 0 #c4f3f3; }
  .task.bright { background: linear-gradient(115deg, #fafefe, #bff1f1 50%, #e0f8f8); }
  .ie-task { padding-left: 4px; }
  .media-task { padding-left: 1px; }
  .cmd-task { padding-right: 1px; }
  .firefox-task { padding-left: 2px; }
  .code { color: #0179cb; }
  .vs { color: #8661c5; }
  .stack-task { border-right: 1px solid #2a7678; background: linear-gradient(90deg, #8ce5e5 3px, #2a7678 3px 4px, #8ce5e5 4px); }
  .tray { margin-left: auto; display: flex; align-items: center; color: #fff; }
  .t1 { margin-right: 14px; }
  .t2 { margin-right: 7px; }
  .t3 { margin-right: 8px; }
  .t4 { margin-right: 7px; }
  .t5 { margin-right: 8px; }
  .t6 { margin-right: 15px; }
  .time { width: 56px; display: flex; flex-direction: column; align-items: center; line-height: 17px; letter-spacing: -0.4px; padding-top: 2px; white-space: nowrap; }
  .peek { width: 15px; height: 38px; margin-left: 8px; box-sizing: border-box; border: 1px solid #236768; box-shadow: inset 1px 1px 0 #a9dada; background: linear-gradient(#77bcbc, #4ba0a1 50%, #56cfcf); }
</style>
